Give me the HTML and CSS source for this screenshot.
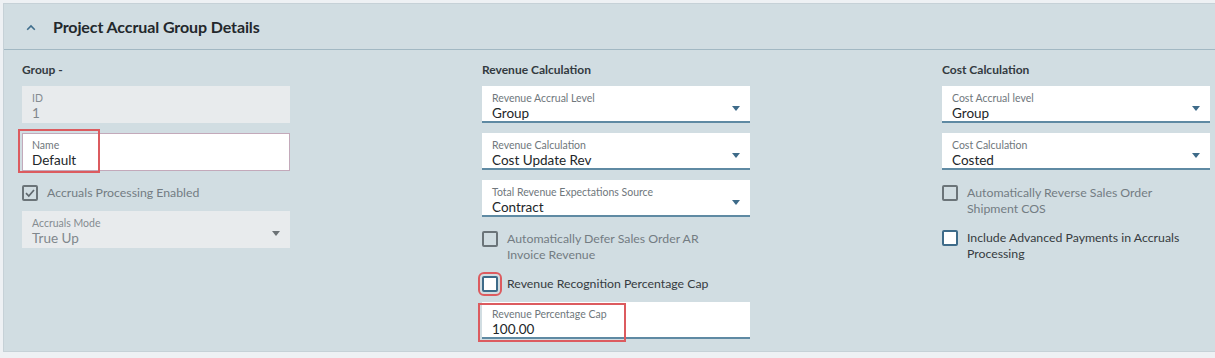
FILE: index.html
```html
<!DOCTYPE html>
<html>
<head>
<meta charset="utf-8">
<link rel="stylesheet" href="styles.css">
</head>
<body>
<div class="panel">
  <div class="header">
    <svg class="chev" width="10" height="7" viewBox="0 0 10 7"><path d="M1.2 5.8 L5 2 L8.8 5.8" fill="none" stroke="#3f6d8c" stroke-width="1.6"/></svg>
    <h2 class="title">Project Accrual Group Details</h2>
  </div>
  <div class="content">
    <div class="col">
      <div class="heading">Group -</div>
      <div class="field disabled">
        <div class="label">ID</div>
        <div class="value">1</div>
      </div>
      <div class="field name">
        <span class="hl hl-name"></span>
        <div class="label">Name</div>
        <div class="value">Default</div>
      </div>
      <div class="check dis first">
        <span class="box"><svg width="12" height="12" viewBox="0 0 12 12"><path d="M2 6.2 L4.8 9 L10 3" fill="none" stroke="#5f686e" stroke-width="1.7"/></svg></span>
        <span class="ctext">Accruals Processing Enabled</span>
      </div>
      <div class="field disabled select mode">
        <div class="label">Accruals Mode</div>
        <div class="value">True Up</div>
        <span class="arrow grey"></span>
      </div>
    </div>

    <div class="col">
      <div class="heading">Revenue Calculation</div>
      <div class="field select">
        <div class="label">Revenue Accrual Level</div>
        <div class="value">Group</div>
        <span class="arrow"></span>
      </div>
      <div class="field select">
        <div class="label">Revenue Calculation</div>
        <div class="value">Cost Update Rev</div>
        <span class="arrow"></span>
      </div>
      <div class="field select">
        <div class="label">Total Revenue Expectations Source</div>
        <div class="value">Contract</div>
        <span class="arrow"></span>
      </div>
      <div class="check dis first">
        <span class="box"></span>
        <span class="ctext">Automatically Defer Sales Order AR<br>Invoice Revenue</span>
      </div>
      <div class="check en second">
        <span class="box hl-box"></span>
        <span class="ctext">Revenue Recognition Percentage Cap</span>
      </div>
      <div class="field underline cap">
        <span class="hl hl-cap"></span>
        <div class="label">Revenue Percentage Cap</div>
        <div class="value">100.00</div>
      </div>
    </div>

    <div class="col">
      <div class="heading">Cost Calculation</div>
      <div class="field select">
        <div class="label">Cost Accrual level</div>
        <div class="value">Group</div>
        <span class="arrow"></span>
      </div>
      <div class="field select">
        <div class="label">Cost Calculation</div>
        <div class="value">Costed</div>
        <span class="arrow"></span>
      </div>
      <div class="check dis first cost1">
        <span class="box"></span>
        <span class="ctext">Automatically Reverse Sales Order<br>Shipment COS</span>
      </div>
      <div class="check en second">
        <span class="box"></span>
        <span class="ctext">Include Advanced Payments in Accruals<br>Processing</span>
      </div>
    </div>
  </div>
</div>
</body>
</html>
```

FILE: styles.css
```css
html, body {
  margin: 0;
  padding: 0;
  background: #eef1f4;
  font-family: Lato, "Liberation Sans", sans-serif;
}

.panel {
  margin: 3px 0 0 3px;
  height: 349px;
  box-sizing: border-box;
  background: #d1dde2;
  border: 1px solid #c6d1d7;
  border-right: none;
}

.header {
  height: 45px;
  border-bottom: 1px solid #a2b8c3;
  display: flex;
  align-items: center;
  padding-left: 22px;
}

.chev {
  display: block;
  margin-top: 1px;
}

.title {
  margin: 0 0 0 17px;
  font-size: 16px;
  font-weight: 700;
  color: #23282c;
  letter-spacing: -0.1px;
}

.content {
  display: grid;
  grid-template-columns: 268px 268px 268px;
  column-gap: 192px;
  padding: 11px 0 0 18px;
}

.col {
  display: flex;
  flex-direction: column;
}

.heading {
  font-size: 12px;
  font-weight: 700;
  color: #333a40;
  line-height: 17px;
  margin-bottom: 8px;
}

.field {
  position: relative;
  height: 37px;
  box-sizing: border-box;
  background: #fff;
  padding: 5px 10px 0 10px;
  margin-bottom: 10px;
}

.label {
  font-size: 10.5px;
  line-height: 14px;
  color: #6f777c;
}

.value {
  font-size: 13.5px;
  line-height: 17px;
  color: #222629;
}

.field.disabled {
  background: #e8ebed;
}

.field.disabled .label {
  color: #858c91;
}

.field.disabled .value {
  color: #80878c;
}

.field.name {
  border: 1px solid #c3a9ba;
  padding: 4px 9px 0 9px;
  height: 38px;
}

.field.select, .field.underline {
  border-bottom: 2px solid #5f8aa3;
}

.field.disabled.select {
  border-bottom: none;
}

.arrow {
  position: absolute;
  right: 10px;
  top: 20px;
  width: 0;
  height: 0;
  border-left: 4.5px solid transparent;
  border-right: 4.5px solid transparent;
  border-top: 5px solid #3e6b89;
}

.arrow.grey {
  border-top-color: #6c7276;
}

.field.mode {
  margin-top: 11px;
}

.check {
  display: flex;
  align-items: flex-start;
  gap: 9px;
}

.check.first {
  margin-top: 4px;
}

.check.cost1 {
  margin-top: 5px;
}

.check.second {
  margin-top: 13px;
}

.col .check + .field {
  margin-top: 10px;
}

.box {
  width: 16px;
  height: 16px;
  box-sizing: border-box;
  border: 2px solid #6b7479;
  border-radius: 2px;
  flex: none;
  display: flex;
  align-items: center;
  justify-content: center;
}

.check.en .box {
  border-color: #3e6b89;
  background: #fff;
}

.ctext {
  font-size: 12.3px;
  line-height: 16px;
  color: #737c82;
}

.check.en .ctext {
  color: #363b40;
}

.hl-box {
  outline: 2px solid #dc5b5f;
  outline-offset: 2px;
}

.hl {
  position: absolute;
  border: 2px solid #dc5b5f;
  box-sizing: border-box;
}

.hl-name {
  left: -5px;
  top: -5px;
  width: 82px;
  height: 44px;
}

.hl-cap {
  left: -4px;
  top: 1px;
  width: 148px;
  height: 39px;
}
```
